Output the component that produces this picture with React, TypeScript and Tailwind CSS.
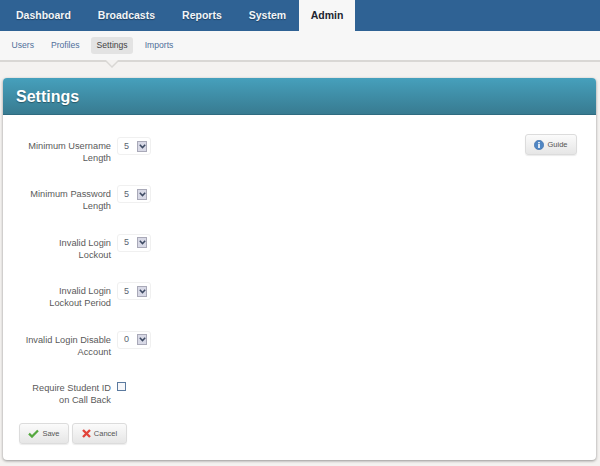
const tabs = ['Dashboard', 'Broadcasts', 'Reports', 'System'];
const subTabs = ['Users', 'Profiles', 'Settings', 'Imports'];

const rows = [
  { label: ['Minimum Username', 'Length'], value: '5' },
  { label: ['Minimum Password', 'Length'], value: '5' },
  { label: ['Invalid Login', 'Lockout'], value: '5' },
  { label: ['Invalid Login', 'Lockout Period'], value: '5' },
  { label: ['Invalid Login Disable', 'Account'], value: '0' },
];

function FieldLabel({ lines }: { lines: string[] }) {
  return (
    <div className="w-[108px] text-right text-[9.25px] leading-[12px] text-[#5a5a5a]">
      {lines.map((line) => (
        <div key={line}>{line}</div>
      ))}
    </div>
  );
}

function FakeSelect({ value }: { value: string }) {
  return (
    <div className="mt-[-3px] flex h-[18px] w-[34px] items-center justify-between rounded-[3px] border border-[#f0f0f0] bg-white pl-[6px] pr-[3px]">
      <span className="text-[9px] leading-none text-[#5a6470]">{value}</span>
      <div className="flex h-[11px] w-[10px] items-center justify-center border border-[#a9a9b8] bg-[#d8d9e6]">
        <svg width="7" height="5" viewBox="0 0 7 5">
          <path d="M0.8 0.8 L3.5 3.6 L6.2 0.8" fill="none" stroke="#3d4a63" strokeWidth="1.5" />
        </svg>
      </div>
    </div>
  );
}

function Button({ children, className }: { children: React.ReactNode; className: string }) {
  return (
    <button
      className={`flex h-[21px] items-center justify-center gap-[3px] rounded-[3px] border border-[#dcdcdc] bg-gradient-to-b from-[#fbfbfb] to-[#e6e6e6] text-[7.5px] text-[#555] shadow-[0_1px_1px_rgba(0,0,0,0.08)] ${className}`}
    >
      {children}
    </button>
  );
}

export default function App() {
  return (
    <div className="flex h-[466px] w-[600px] flex-col overflow-hidden bg-[#f4f2f0] font-['Liberation_Sans',Arial,sans-serif]">
      <nav className="flex h-[31px] shrink-0 bg-[#2f6294] pl-[2.5px]">
        {tabs.map((tab) => (
          <a
            key={tab}
            className="flex items-center px-[13.5px] text-[10.5px] font-bold text-[#f2f5f8] [text-shadow:0_1px_1px_rgba(0,0,0,0.35)]"
          >
            {tab}
          </a>
        ))}
        <a className="ml-[-0.5px] flex w-[56px] items-center justify-center bg-[#f7f7f7] text-[10.5px] font-bold text-[#1c2530]">
          Admin
        </a>
      </nav>

      <div className="relative flex h-[31px] shrink-0 items-center gap-[6px] border-b-2 border-[#d9d7d4] bg-[#f7f7f7] pb-[1px] pl-[6px]">
        {subTabs.map((tab) => (
          <a
            key={tab}
            className={
              tab === 'Settings'
                ? 'rounded-[3px] bg-[#e3e3e3] px-[5.5px] py-[3px] text-[8.6px] leading-[11px] text-[#444]'
                : 'px-[5.5px] py-[3px] text-[8.6px] leading-[11px] text-[#4f6f9a]'
            }
          >
            {tab}
          </a>
        ))}
        <svg className="absolute left-[105px] top-[29px]" width="14" height="8" viewBox="0 0 14 8">
          <path d="M0 0 H14 L7 7 Z" fill="#f4f2f0" />
          <path d="M0 0 L7 7 L14 0" fill="none" stroke="#d9d7d4" strokeWidth="1.4" />
        </svg>
      </div>

      <main className="mx-[3px] mt-[16px] flex h-[382px] w-[593px] flex-col rounded-[4px] bg-white shadow-[0_1px_3px_rgba(0,0,0,0.4)]">
        <header className="flex h-[37px] shrink-0 items-center rounded-t-[4px] border-b border-[#2f6b80] bg-gradient-to-b from-[#46a0bc] to-[#387b91] pl-[13px] pt-[1px]">
          <h1 className="text-[16px] font-bold text-white [text-shadow:0_1px_1px_rgba(0,0,0,0.35)]">Settings</h1>
        </header>

        <div className="flex flex-1 justify-between pr-[19px] pt-[25px]">
          <div className="flex flex-col">
            <div className="flex flex-col gap-[24.4px]">
              {rows.map((row) => (
                <div key={row.label.join(' ')} className="flex gap-[6px]">
                  <FieldLabel lines={row.label} />
                  <FakeSelect value={row.value} />
                </div>
              ))}
              <div className="flex gap-[6px]">
                <FieldLabel lines={['Require Student ID', 'on Call Back']} />
                <div className="h-[9px] w-[9px] border border-[#5b7a9f] bg-[#f6f7fa]" />
              </div>
            </div>

            <div className="ml-[16px] mt-[17px] flex gap-[3px]">
              <Button className="w-[50px]">
                <svg width="11" height="9" viewBox="0 0 11 9">
                  <path d="M1 4.6 L4 7.6 L10 1.4" fill="none" stroke="#55a83f" strokeWidth="2.2" />
                </svg>
                Save
              </Button>
              <Button className="w-[55px]">
                <svg width="9" height="9" viewBox="0 0 9 9">
                  <path d="M1 1 L8 8 M8 1 L1 8" fill="none" stroke="#e2443a" strokeWidth="2.4" />
                </svg>
                Cancel
              </Button>
            </div>
          </div>

          <Button className="mt-[-6px] w-[52px]">
            <svg width="10" height="10" viewBox="0 0 10 10">
              <circle cx="5" cy="5" r="4.7" fill="#4f86c4" stroke="#3a6aa5" strokeWidth="0.6" />
              <rect x="4.2" y="2" width="1.6" height="1.3" fill="#fff" />
              <rect x="4.2" y="4" width="1.6" height="4" fill="#fff" />
            </svg>
            Guide
          </Button>
        </div>
      </main>
    </div>
  );
}
